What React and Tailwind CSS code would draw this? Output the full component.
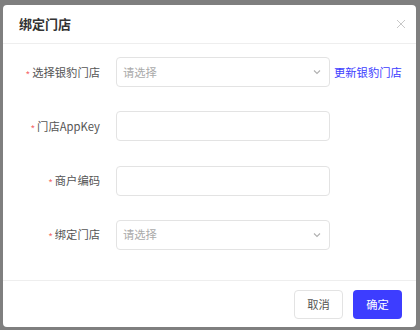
import React from "react";

const Chevron = () => (
  <svg width="10" height="10" viewBox="0 0 10 10" className="shrink-0">
    <path d="M2 3.5 L5 6.5 L8 3.5" fill="none" stroke="#b0b0b0" strokeWidth="1.1" />
  </svg>
);

function Row({ label, children, extra }) {
  return (
    <div className="flex items-center h-[30px]">
      <div className="w-[97px] shrink-0 flex justify-end items-center text-[11.3px] text-[#555]">
        <span className="text-[#f56c6c] mr-[2px] text-[10px] translate-y-[1.5px]">*</span>
        <span>{label}</span>
      </div>
      <div className="ml-[16px] w-[214px] h-[30px] shrink-0">{children}</div>
      {extra}
    </div>
  );
}

const Select = () => (
  <div className="h-full w-full border border-[#e3e3e3] rounded-[4px] flex items-center justify-between pl-[6px] pr-[7px] text-[11.3px] text-[#aaa]">
    <span>请选择</span>
    <Chevron />
  </div>
);

const Input = () => (
  <div className="h-full w-full border border-[#e3e3e3] rounded-[4px]" />
);

export default function App() {
  return (
    <div
      className="w-[420px] h-[330px] bg-[#7f7f7f] pt-[5px] pl-[3px]"
      style={{ fontFamily: '"Noto Sans CJK SC", "Noto Sans", sans-serif' }}
    >
      <div className="w-[413px] h-[322px] bg-white rounded-[4px] flex flex-col">
        <div className="h-[39px] border-b border-[#eeeeee] flex items-center justify-between pl-[16px] pr-[10px]">
          <span className="text-[13px] font-bold text-[#333]">绑定门店</span>
          <svg width="10" height="10" viewBox="0 0 10 10">
            <path d="M1 1 L9 9 M9 1 L1 9" stroke="#c8c8c8" strokeWidth="1" />
          </svg>
        </div>
        <div className="flex-1 flex flex-col pt-[13px] gap-[24.3px]">
          <Row
            label="选择银豹门店"
            extra={<span className="ml-[4px] text-[11.3px] text-[#3d3dff]">更新银豹门店</span>}
          >
            <Select />
          </Row>
          <Row label="门店AppKey">
            <Input />
          </Row>
          <Row label="商户编码">
            <Input />
          </Row>
          <Row label="绑定门店">
            <Select />
          </Row>
        </div>
        <div className="h-[47px] border-t border-[#eeeeee] flex items-start justify-end pt-[9px] pr-[14px] gap-[10px]">
          <button className="w-[49px] h-[29px] border border-[#e3e3e3] rounded-[4px] text-[11.3px] text-[#555] bg-white">
            取消
          </button>
          <button className="w-[49px] h-[29px] rounded-[4px] text-[11.3px] text-white bg-[#3d3dff]">
            确定
          </button>
        </div>
      </div>
    </div>
  );
}
